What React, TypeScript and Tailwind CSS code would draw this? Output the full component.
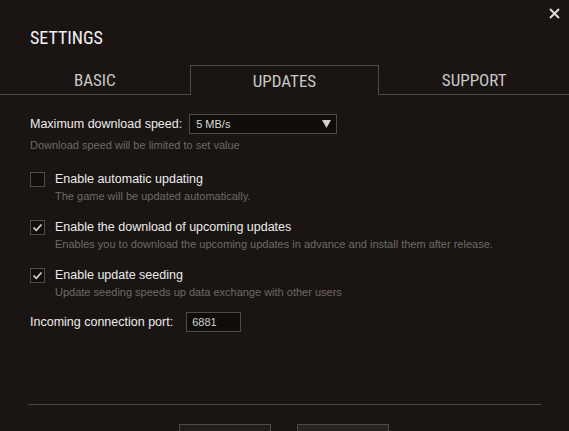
import React from 'react'

const body = { fontFamily: 'Tahoma, "Liberation Sans", Arial, sans-serif' }
const cond = { fontFamily: '"Roboto Condensed", "DejaVu Sans Condensed", "Liberation Sans Narrow", Roboto, sans-serif' }

const Check = ({ checked }: { checked?: boolean }) => (
    <div className="w-[15px] h-[15px] border border-[#4f4b48] bg-[#120e0c] flex items-center justify-center shrink-0">
        {checked && (
            <svg width="11" height="9" viewBox="0 0 11 9">
                <path d="M1.5 4.5 L4.3 7.3 L9.5 1.5" stroke="#d8d8d8" strokeWidth="1.6" fill="none" />
            </svg>
        )}
    </div>
)

const Option = ({ checked, label, desc }: { checked?: boolean, label: string, desc: string }) => (
    <div className="flex gap-[10px]">
        <div className="pt-[1px]"><Check checked={checked} /></div>
        <div className="flex flex-col">
            <span className="text-[12.5px] leading-[16px] text-[#ececec]">{label}</span>
            <span className="text-[11px] leading-[16px] text-[#6e6a67] mt-[1px]">{desc}</span>
        </div>
    </div>
)

export default function App() {
    return (
        <div className="w-[569px] h-[431px] bg-[#1a1512] overflow-hidden relative" style={body}>

            <button className="absolute top-[8px] right-[9px] w-[11px] h-[11px]">
                <svg width="11" height="11" viewBox="0 0 11 11">
                    <path d="M1 1 L10 10 M10 1 L1 10" stroke="#dcdcdc" strokeWidth="2" />
                </svg>
            </button>

            <div className="pt-[28px] pl-[30px] text-[18px] leading-[20px] text-[#f2f2f2]" style={cond}>SETTINGS</div>

            <div className="grid grid-cols-3 mt-[17px] h-[29px] text-[17px] text-[#c8c8c8]" style={cond}>
                <div className="border-b border-[#4f4b48] flex items-center justify-center pt-[3px]">BASIC</div>
                <div className="border border-b-0 border-[#4f4b48] flex items-center justify-center pt-[3px]">UPDATES</div>
                <div className="border-b border-[#4f4b48] flex items-center justify-center pt-[3px]">SUPPORT</div>
            </div>

            <div className="pl-[30px] pt-[20px] flex flex-col">
                <div className="flex items-center gap-[7px]">
                    <span className="text-[12.5px] text-[#ececec]">Maximum download speed:</span>
                    <div className="w-[148px] h-[20px] border border-[#4f4b48] bg-[#0f0c0a] flex items-center justify-between pl-[6px] pr-[5px]">
                        <span className="text-[11px] text-[#dcdcdc]">5 MB/s</span>
                        <svg width="9" height="8" viewBox="0 0 9 8"><path d="M0 0 H9 L4.5 8 Z" fill="#d0d0d0" /></svg>
                    </div>
                </div>
                <span className="text-[11px] leading-[16px] text-[#6e6a67] mt-[3px]">Download speed will be limited to set value</span>

                <div className="flex flex-col gap-[15px] mt-[18px]">
                    <Option label="Enable automatic updating" desc="The game will be updated automatically." />
                    <Option checked label="Enable the download of upcoming updates" desc="Enables you to download the upcoming updates in advance and install them after release." />
                    <Option checked label="Enable update seeding" desc="Update seeding speeds up data exchange with other users" />
                </div>

                <div className="flex items-center gap-[13px] mt-[12px]">
                    <span className="text-[12.5px] text-[#ececec]">Incoming connection port:</span>
                    <div className="w-[55px] h-[20px] border border-[#4f4b48] bg-[#0f0c0a] flex items-center pl-[5px]">
                        <span className="text-[11px] text-[#cfcfcf]">6881</span>
                    </div>
                </div>
            </div>

            <div className="mx-[28px] mt-[72px] border-t border-[#4a4643]"></div>

            <div className="flex justify-center gap-[26px] mt-[19px] pr-[2px]">
                <div className="w-[92px] h-[28px] border border-[#4f4b48] bg-[#221d1a]"></div>
                <div className="w-[92px] h-[28px] border border-[#4f4b48] bg-[#2a2420]"></div>
            </div>
        </div>
    )
}
